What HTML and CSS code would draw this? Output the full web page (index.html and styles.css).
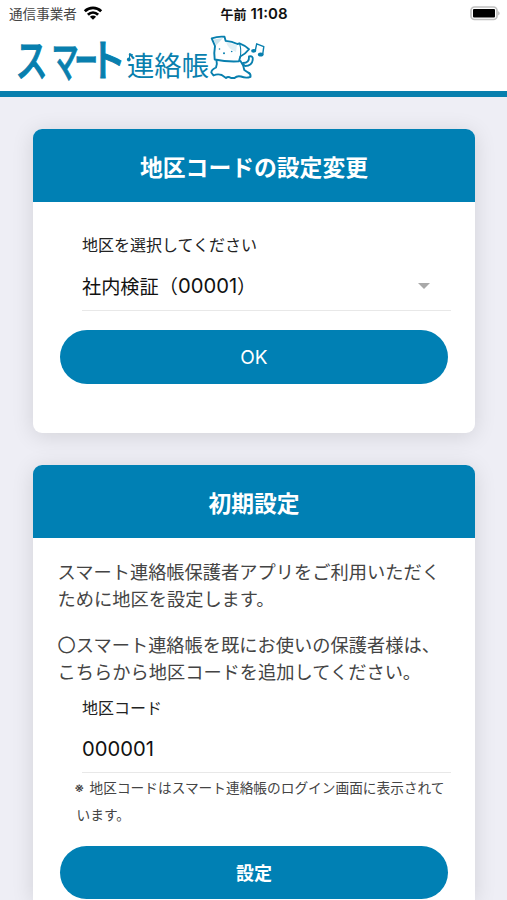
FILE: index.html
```html
<!DOCTYPE html>
<html lang="ja">
<head>
<meta charset="utf-8">
<meta name="viewport" content="width=device-width, initial-scale=1">
<title>スマート連絡帳</title>
<link rel="stylesheet" href="styles.css">
</head>
<body>
<header class="header">
  <div class="status">
    <div class="carrier">通信事業者
      <svg class="wifi" viewBox="0 0 20 14" width="20" height="14">
        <g fill="none" stroke="#000" stroke-width="2.8">
          <path d="M1.8 5.2C6.5.8 13.500.8 18.200 5.200"/>
          <path d="M4.900 8.700C7.900 5.800 12.100 5.800 15.100 8.700"/>
        </g>
        <path d="M10 13.800L6.900 10.700C8.600 9.200 11.400 9.200 13.100 10.700Z"/>
      </svg>
    </div>
    <time class="clock">午前<span>11:08</span></time>
    <svg class="battery" viewBox="0 0 31 15" width="31" height="15">
      <rect x="1" y="1" width="26" height="12.500" rx="3.500" fill="#fff" stroke="#c0c0c0" stroke-width="1.700"/>
      <rect x="3" y="3" width="22" height="8.600" rx="1" fill="#000"/>
      <path d="M28.300 4.900Q30.800 7.200 28.300 9.500Z" fill="#aaa"/>
    </svg>
  </div>
  <svg class="logo" viewBox="0 0 270 60" width="270" height="60">
    <g class="logo-main">
      <text transform="translate(15.500 46.500) scale(.73 1)">ス</text>
      <text transform="translate(51.500 47.500) scale(.62 1)">マ</text>
      <text transform="translate(74.500 47) scale(.53 1)">ー</text>
      <text transform="translate(88.500 46.500) scale(.86 1)">ト</text>
    </g>
    <text class="logo-sub" x="127" y="45.500" textLength="82">連絡帳</text>
    <g fill="none" stroke="#087fae" stroke-width="1.900" stroke-linejoin="round" stroke-linecap="round">
      <path d="M249 26.500Q253.500 25.500 252.700 30Q252 36 245 36Q243.500 35 243 33Q249.500 33 249 26.500Z" fill="#fff"/>
      <path d="M216.500 30.500Q217.500 34.500 216 37.500Q211.500 39.500 211.300 42.500L213.500 45.500Q217.500 43.500 221.700 45L226 48Q228 46 231 48L234.500 48Q237 45.500 241 46.500Q246 48.500 250.500 46.800Q251 43.500 248 42.500L244.300 40Q243.500 35 240.500 31" fill="#fff"/>
      <path d="M215 16L211.700 8.300Q218 6.200 224.500 6.800L225.700 10.900Q232 11.300 237.500 14L239.500 13.300Q244.500 15 249 19.300Q245.500 24 240.300 26.500L239 31.300Q227 32 214.700 29.500Q213.800 22.500 215 16Z" fill="#fff"/>
      <path d="M239.500 13.500Q241.500 19 240.300 26.500" stroke-width="1.100"/>
      <path d="M255.300 20.500L256.700 13.800L263.800 16.700L262.700 24.300" stroke-width="1.400"/>
    </g>
    <g fill="#087fae">
      <path d="M213.500 9.500L223 8L216 15.500Z" opacity=".22"/>
      <path d="M226 12L237 15L236 22Q228 19 226 12Z" opacity=".12"/>
      <circle cx="219.500" cy="19" r=".8"/><circle cx="231.700" cy="21.500" r=".8"/><circle cx="224" cy="23.300" r="1"/>
      <ellipse cx="253.700" cy="20.800" rx="2.600" ry="1.900"/>
      <ellipse cx="260.700" cy="24.500" rx="2.800" ry="2"/>
      <circle cx="128.800" cy="29.500" r="1.900"/>
    </g>
    <path d="M129.500 29V23.500L133 25" fill="none" stroke="#087fae" stroke-width="1"/>
  </svg>
</header>
<main class="main">
  <section class="card">
    <h1 class="card-title">地区コードの設定変更</h1>
    <div class="card-body first">
      <div class="field">
        <div class="label">地区を選択してください</div>
        <div class="value">社内検証（<span class="digits">00001</span>）<i class="caret"></i></div>
      </div>
      <button class="button">OK</button>
    </div>
  </section>
  <section class="card last">
    <h2 class="card-title">初期設定</h2>
    <div class="card-body second">
      <p class="text">スマート連絡帳保護者アプリをご利用いただく<br>ために地区を設定します。</p>
      <p class="text">〇スマート連絡帳を既にお使いの保護者様は、<br>こちらから地区コードを追加してください。</p>
      <div class="field">
        <div class="label">地区コード</div>
        <div class="value"><span class="digits">000001</span></div>
      </div>
      <p class="note"><span class="mark">※</span>地区コードはスマート連絡帳のログイン画面に表示されて<br>います。</p>
      <button class="button bold">設定</button>
    </div>
  </section>
</main>
</body>
</html>
```
FILE: styles.css
```css
* { box-sizing: border-box; }
body {
  margin: 0;
  background: #eeeef5;
  color: #222;
  font-family: Inter, "Noto Sans CJK JP", sans-serif;
}
h1, h2, p { margin: 0; }
.header {
  height: 97px;
  background: #fff;
  border-bottom: 6px solid #087fae;
}
.status {
  display: grid;
  grid-template-columns: 1fr auto 1fr;
  align-items: center;
  height: 28px;
  padding: 0 6px 0 7px;
}
.carrier {
  display: flex;
  align-items: center;
  gap: 6px;
  padding-left: 2px;
  color: #444;
  font-size: 13.6px;
  line-height: 20px;
  white-space: nowrap;
}
.wifi { margin-top: -2px; }
.clock {
  display: flex;
  align-items: center;
  gap: 4px;
  color: #111;
  font-size: 13px;
  font-weight: 700;
  line-height: 20px;
}
.clock span { font-weight: 600; font-size: 15px; }
.battery { justify-self: end; margin-top: -2px; }
.logo {
  display: block;
  margin-top: 2px;
  overflow: visible;
  fill: #087fae;
  font-family: "Noto Sans CJK JP", sans-serif;
}
.logo-main { font-size: 44px; font-weight: 500; stroke: #087fae; stroke-width: 1; }
.logo-sub { font-size: 27.3px; font-weight: 400; }
.main {
  height: 803px;
  display: flex;
  flex-direction: column;
  gap: 32px;
  padding: 32px 32px 0 33px;
  overflow: hidden;
}
.card {
  flex: none;
  border-radius: 9px;
  background: #fff;
  box-shadow: 0 3px 22px rgba(0, 0, 0, .12);
}
.last { border-radius: 9px 9px 0 0; }
.card-title {
  height: 73px;
  border-radius: 9px 9px 0 0;
  background: #0080b4;
  color: #fff;
  font-size: 22.8px;
  font-weight: 600;
  line-height: 78px;
  text-align: center;
}
.card-body { display: flex; flex-direction: column; }
.first { height: 231px; padding: 30px 27px 0; }
.second { height: 362px; padding: 21px 27px 0 24.5px; }
.field { margin-left: 22px; margin-right: -3px; border-bottom: 1px solid #e8e8e8; }
.second .field { margin-left: 24.5px; }
.label { font-size: 16px; line-height: 26px; }
.value {
  display: flex;
  align-items: center;
  height: 52px;
  padding-top: 3px;
  color: #111;
  font-size: 19.2px;
}
.second .value { height: 51px; padding-top: 3px; }
.digits { font-size: 20.2px; }
.caret {
  margin-left: auto;
  margin-right: 21px;
  border: 6px solid transparent;
  border-top-color: #a9a9a9;
  border-bottom: 0;
}
.button {
  flex: none;
  height: 54px;
  margin: 19px 0 0;
  padding: 1px 0 0;
  border: 0;
  border-radius: 27px;
  background: #0080b4;
  color: #fff;
  font: 400 19px/53px Inter, "Noto Sans CJK JP", sans-serif;
}
.bold { height: 53px; margin: 17px 0 0 2.5px; padding-top: 3px; font-size: 18px; font-weight: 700; line-height: 50px; }
.text {
  margin-bottom: 20px;
  color: #444;
  font-size: 18.24px;
  line-height: 26.6px;
  white-space: nowrap;
}
.text + .text { margin-bottom: 10px; }
.note {
  padding: 2px 0 0 19px;
  color: #444;
  font-size: 13.7px;
  line-height: 26.6px;
  white-space: nowrap;
}
.mark { display: inline-block; width: 13px; font-size: 13.7px; font-weight: 500; line-height: 1; text-indent: -2px; }
```
